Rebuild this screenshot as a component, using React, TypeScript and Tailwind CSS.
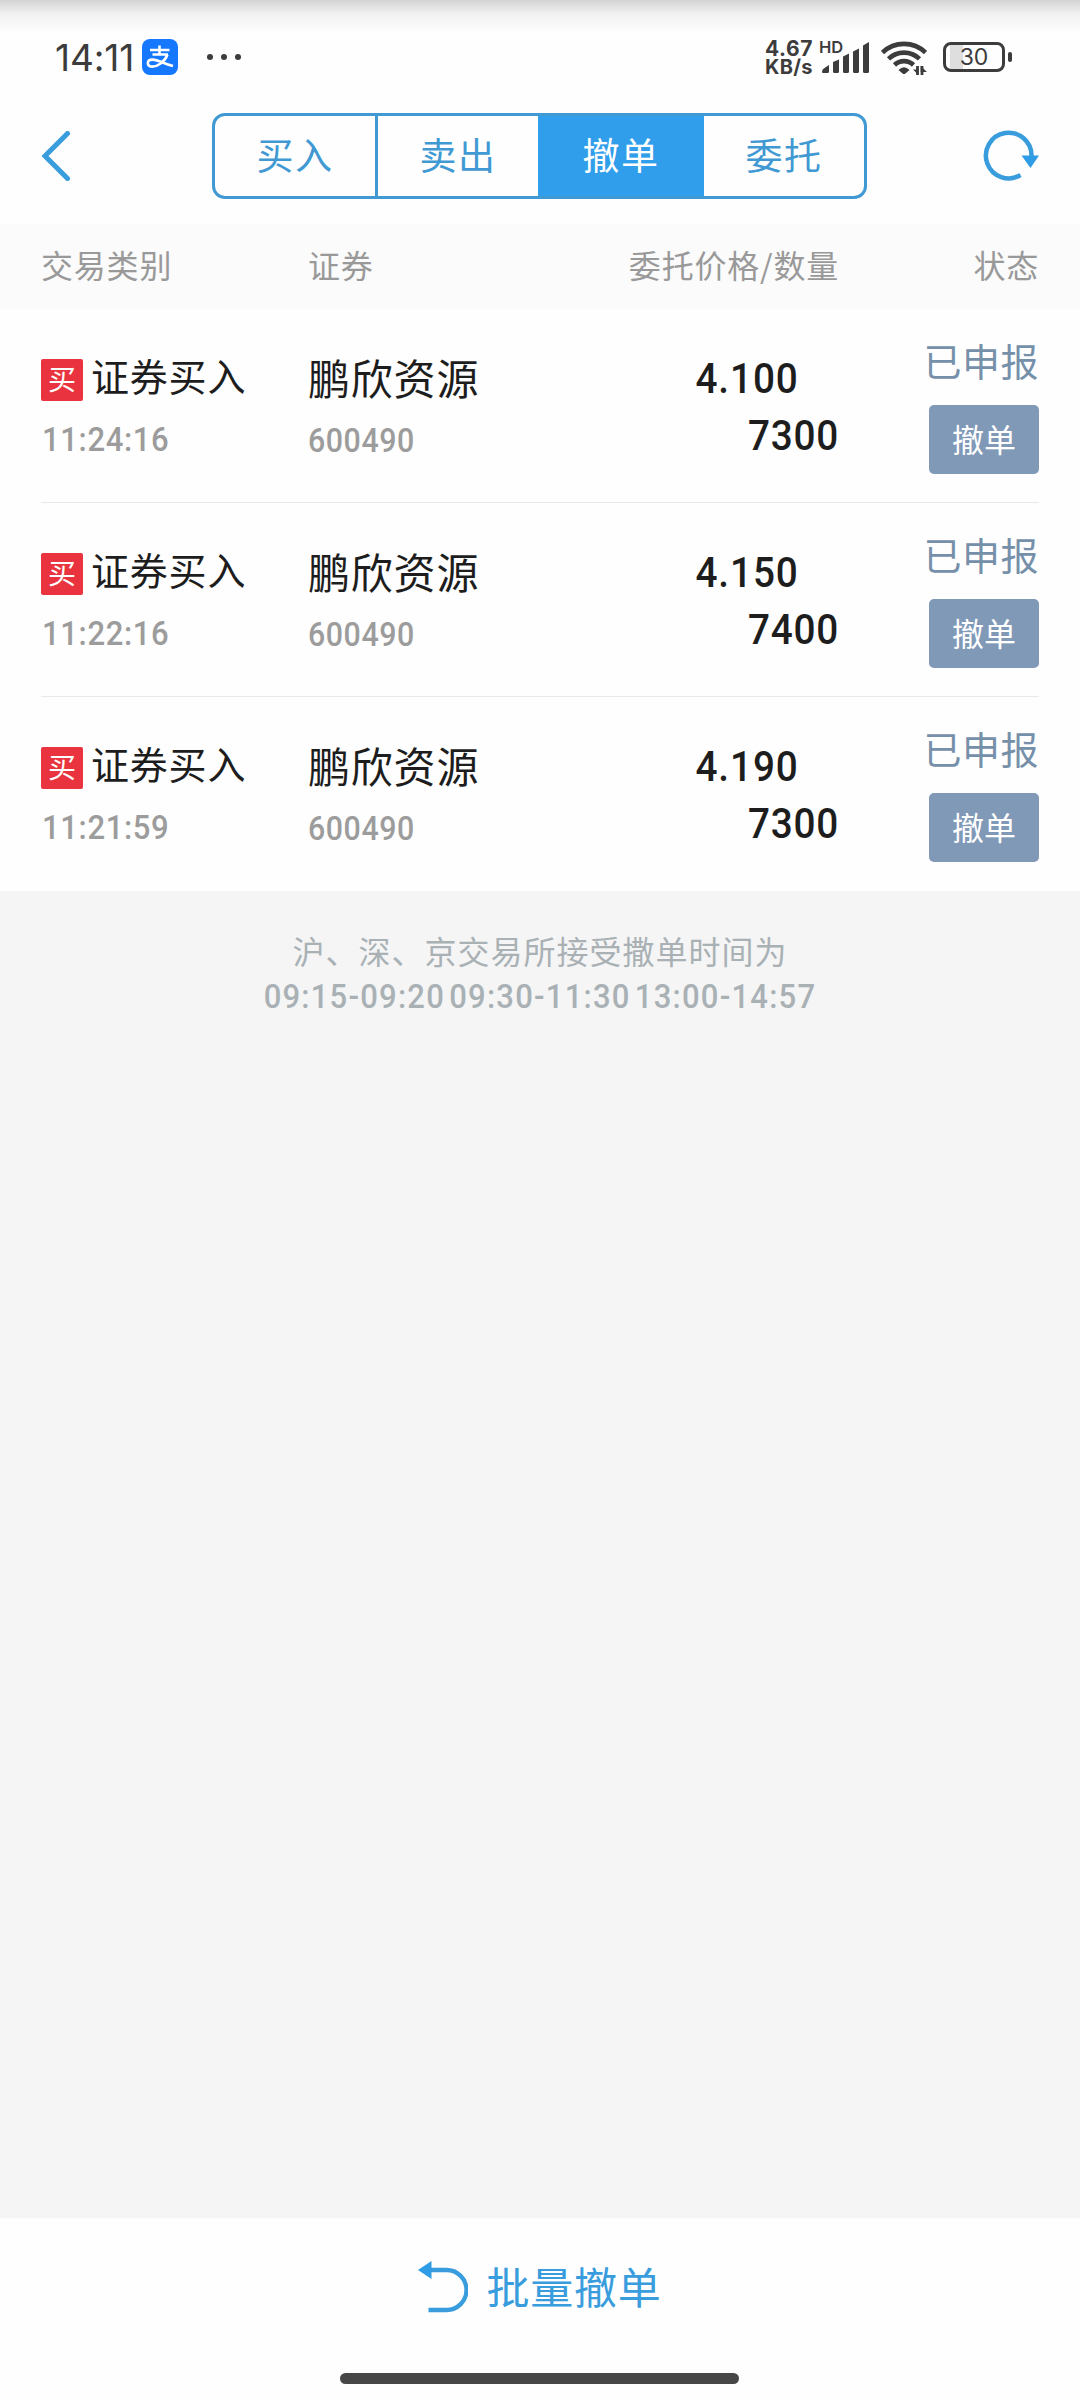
import type { ReactNode } from "react";

const orders = [
  { time: "11:24:16", price: "4.100", qty: "7300" },
  { time: "11:22:16", price: "4.150", qty: "7400" },
  { time: "11:21:59", price: "4.190", qty: "7300" },
];

function Num({ className, children }: { className: string; children: ReactNode }) {
  return <span className={"inline-block whitespace-nowrap font-['Roboto',sans-serif] " + className}>{children}</span>;
}

function StatusBar() {
  return (
    <div className="flex h-[113px] items-start bg-gradient-to-b from-[#d3d3d3] via-[#f1f1f1] via-[12%] to-[#fefefe] to-[30%] pl-[55px] pr-[68px] pt-[39px] text-[#3c3c3c]">
      <div className="h-9 w-[80px] whitespace-nowrap font-['Inter',sans-serif] text-[37px] leading-[37px] tracking-[-0.1px]">14:11</div>
      <div className="ml-[7px] h-9 w-9 rounded-[8px] bg-[#1677ff]">
        <svg viewBox="0 0 36 36" className="h-9 w-9" fill="none" stroke="#fff" strokeWidth="2.6">
          <path d="M8 11H27.500M17.500 6.500V15.500M10.500 15.500H26" />
          <path d="M25.500 15.500C23 22.500 16 27.800 9.800 27.600C4.500 27.200 4.500 20.800 10.200 20.600C16.500 20.500 22 25 31 27" />
        </svg>
      </div>
      <div className="ml-[29px] mt-[15px] flex gap-2">
        <i className="h-1.5 w-1.5 rounded-full bg-[#3c3c3c]" />
        <i className="h-1.5 w-1.5 rounded-full bg-[#3c3c3c]" />
        <i className="h-1.5 w-1.5 rounded-full bg-[#3c3c3c]" />
      </div>
      <div className="ml-auto mt-px w-[53px] whitespace-nowrap font-['Inter',sans-serif] text-[21px] font-bold leading-[18px]">
        <div className="tracking-[0.6px]">4.67</div>
        <div className="text-[20px] tracking-[0.3px]">KB/s</div>
      </div>
      <div className="relative ml-[3px] h-9 w-[50px]">
        <svg className="h-9 w-[50px]" viewBox="0 0 50 36" fill="#3c3c3c">
          <path d="M1 33Q1 30 3.500 29L8 26V32.500Q8 34 6.500 34H2Q1 34 1 33ZM12 32.500V23L18 20.500V32.500Q18 34 16.500 34H13.500Q12 34 12 32.500ZM22 32.500V17.500L28 14.500V32.500Q28 34 26.500 34H23.500Q22 34 22 32.500ZM32 32.500V12.500L38 9.500V32.500Q38 34 36.500 34H33.500Q32 34 32 32.500ZM42 32.500V6.500L48 3V32.500Q48 34 46.500 34H43.500Q42 34 42 32.500Z" />
        </svg>
        <span className="absolute -left-[2px] -top-[2px] font-['Inter',sans-serif] text-[16.5px] font-semibold leading-[20px]">HD</span>
      </div>
      <svg className="ml-[10px] h-9 w-[46px]" viewBox="0 0 46 36" fill="none" stroke="#3c3c3c" strokeWidth="4.600">
        <path d="M1.500 13.500A31 31 0 0 1 44.500 13.500M7.500 19.800A22.500 22.500 0 0 1 38.500 19.800M13.500 26A13.500 13.500 0 0 1 32.500 26" />
        <path d="M17.500 31Q23 25.500 28.500 31L24.500 34.500Q23 35.500 21.500 34.500Z" fill="#3c3c3c" stroke="none" />
        <path d="M36.500 27V36M41 36V27" strokeWidth="2.800" />
        <path d="M32 30.500H37.500V36ZM39.700 27L46 33H39.700Z" fill="#3c3c3c" stroke="none" />
      </svg>
      <div className="ml-[16px] mt-[3px] flex items-center gap-[3px]">
        <div className="flex h-[30px] w-[62px] items-center justify-center rounded-[8px] border-[3px] border-[#3c3c3c] bg-[linear-gradient(to_right,transparent_4px,#dedede_4px,#dedede_17px,transparent_17px)] font-['Inter',sans-serif] text-[23px] leading-none">30</div>
        <div className="h-[10px] w-1 rounded-full bg-[#3c3c3c]" />
      </div>
    </div>
  );
}

function Tabs() {
  const base = "flex items-center justify-center text-[37px] leading-none tracking-[1.5px] pb-1";
  return (
    <div className="flex h-[86px] w-[655px] overflow-hidden rounded-[13px] border-[3px] border-[#4099d3] text-[#4099d3]">
      <div className={base + " w-[163px] border-r-[3px] border-[#4099d3]"}>买入</div>
      <div className={base + " w-[160px]"}>卖出</div>
      <div className={base + " w-[166px] bg-[#309eea] text-white"}>撤单</div>
      <div className={base + " w-[160px]"}>委托</div>
    </div>
  );
}

function NavBar() {
  return (
    <div className="flex h-[111px] items-start pl-[40px] pr-[40px]">
      <svg className="mt-[18px] h-[50px] w-8" viewBox="0 0 32 50" fill="none" stroke="#389cdd" strokeWidth="5">
        <path d="M27.500 2.500L5 25L27.500 47.500" strokeLinecap="round" strokeLinejoin="miter" />
      </svg>
      <div className="ml-[140px]"><Tabs /></div>
      <svg className="ml-auto mt-[16px] h-[54px] w-[58px]" viewBox="0 0 58 54" fill="none" stroke="#389cdd" strokeWidth="4.500">
        <path d="M38.500 46A22.800 22.800 0 1 1 49.500 27" />
        <path d="M39.500 26.500H57L48.500 39Z" fill="#2f9ce6" stroke="none" />
      </svg>
    </div>
  );
}

function OrderRow({ time, price, qty, last }: { time: string; price: string; qty: string; last: boolean }) {
  return (
    <div className={"mx-[41px] flex h-[194px] border-b " + (last ? "border-transparent" : "border-[#e9e9e9]")}>
      <div className="w-[267px] pt-[47px]">
        <div className="flex h-[44px] items-center">
          <div className="mt-1 flex h-[42px] w-[42px] items-center justify-center rounded-[2px] bg-[#e9333e] pb-1 text-[28px] leading-none text-white">买</div>
          <div className="-mt-[6px] ml-[8px] whitespace-nowrap text-[38px] leading-[44px] tracking-[0.8px] text-[#1d1d1d]">证券买入</div>
        </div>
        <Num className="ml-px mt-[21px] origin-left scale-x-[0.94] text-[33px] font-medium leading-[38px] tracking-[0.7px] text-[#9c9c9c]">{time}</Num>
      </div>
      <div className="w-[200px] pt-[45px]">
        <div className="h-[46px] whitespace-nowrap text-[42px] leading-[46px] tracking-[0.8px] text-[#1d1d1d]">鹏欣资源</div>
        <Num className="mt-[22px] origin-left scale-x-[0.92] text-[33px] font-medium leading-[38px] tracking-[0.6px] text-[#9c9c9c]">600490</Num>
      </div>
      <div className="flex w-[331px] flex-col items-end pt-[41px] text-[#1d1d1d]">
        <Num className="mr-[40px] origin-right scale-x-[0.9] text-[43px] font-medium leading-[57px] tracking-[1px]">{price}</Num>
        <Num className="origin-right scale-x-[0.9] text-[43px] font-medium leading-[57px] tracking-[0.8px]">{qty}</Num>
      </div>
      <div className="flex flex-1 flex-col items-end pt-[31px]">
        <div className="whitespace-nowrap text-[38px] leading-[40px] tracking-[0.5px] text-[#7690aa]">已申报</div>
        <div className="mt-[25px] flex h-[69px] w-[110px] items-center justify-center rounded-[5px] bg-[#7f99b7] pb-1 text-[32px] leading-none text-white">撤单</div>
      </div>
    </div>
  );
}

export default function App() {
  return (
    <div className="flex h-[2400px] w-[1080px] flex-col overflow-hidden bg-[#f5f5f5] font-['Noto_Sans_CJK_SC',sans-serif]">
      <div className="bg-[#fefefe]">
        <StatusBar />
        <NavBar />
        <div className="flex h-[85px] items-center bg-[#fbfbfb] pb-[5px] pl-[41px] pr-[41px] text-[32px] leading-none tracking-[0.8px] text-[#999]">
          <div className="w-[267px]">交易类别</div>
          <div className="w-[200px]">证券</div>
          <div className="w-[331px] text-right">委托价格/数量</div>
          <div className="flex-1 text-right">状态</div>
        </div>
        {orders.map((o, i) => (
          <OrderRow key={o.time} {...o} last={i === orders.length - 1} />
        ))}
      </div>
      <div className="flex flex-1 flex-col items-center pt-[37px] text-[#a9b1b5]">
        <div className="text-[32px] leading-[44px] tracking-[1px]">沪、深、京交易所接受撒单时间为</div>
        <Num className="mt-[3px] scale-x-[0.94] text-[33px] font-medium leading-[44px] tracking-[1.3px] [word-spacing:-5px]">09:15-09:20 09:30-11:30 13:00-14:57</Num>
      </div>
      <div className="flex h-[182px] flex-col items-center bg-[#fefefe]">
        <div className="mt-[40px] flex h-[56px] items-center">
          <svg className="mt-[2px] h-[52px] w-[50px]" viewBox="0 0 50 52" fill="none" stroke="#389cdd" strokeWidth="4.300">
            <path d="M12 9H28.500A20 20 0 0 1 28.500 49H10.500" />
            <path d="M0 9L13.500 0V18Z" fill="#2f9ce6" stroke="none" />
          </svg>
          <div className="-mt-[3px] ml-[18px] text-[43px] leading-[56px] tracking-[0.8px] text-[#389cdd]">批量撤单</div>
        </div>
        <div className="mr-px mt-[59px] h-[11px] w-[399px] rounded-full bg-[#474747]" />
      </div>
    </div>
  );
}
